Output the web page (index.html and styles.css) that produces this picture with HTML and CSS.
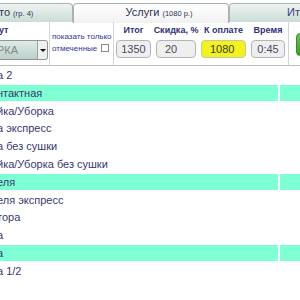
FILE: index.html
```html
<!DOCTYPE html>
<html lang="ru">
<head>
    <meta charset="UTF-8">
    <title>Услуги</title>
    <link rel="stylesheet" href="styles.css">
</head>
<body>
    <div class="app">
        <div class="tabs">
            <div class="tab tab-first">то <small>(гр. 4)</small></div>
            <div class="tab tab-active">Услуги <small>(1080 р.)</small></div>
            <div class="tab tab-last">Итог</div>
        </div>

        <div class="toolbar">
            <div class="cell cell-type">
                <div class="label label-type">ут</div>
                <div class="select">
                    <span class="select-text">РКА</span>
                    <span class="select-arrow"></span>
                </div>
            </div>
            <div class="cell cell-filter">
                показать только<br>отмеченные <span class="check"></span>
            </div>
            <div class="cell cell-sums">
                <div class="field field-total">
                    <div class="label">Итог</div>
                    <div class="box box-center">1350</div>
                </div>
                <div class="field field-discount">
                    <div class="label">Скидка, %</div>
                    <div class="box">20</div>
                </div>
                <div class="field field-pay">
                    <div class="label">К оплате</div>
                    <div class="box box-yellow">1080</div>
                </div>
                <div class="field field-time">
                    <div class="label">Время</div>
                    <div class="box box-center">0:45</div>
                </div>
            </div>
            <div class="cell cell-go">
                <div class="go-btn"></div>
            </div>
        </div>

        <div class="list">
            <div class="row"><div class="name">а 2</div><div class="extra"></div></div>
            <div class="row row-marked"><div class="name">нтактная</div><div class="extra"></div></div>
            <div class="row"><div class="name">йка/Уборка</div><div class="extra"></div></div>
            <div class="row"><div class="name">а экспресс</div><div class="extra"></div></div>
            <div class="row"><div class="name">а без сушки</div><div class="extra"></div></div>
            <div class="row"><div class="name">йка/Уборка без сушки</div><div class="extra"></div></div>
            <div class="row row-marked"><div class="name">еля</div><div class="extra"></div></div>
            <div class="row"><div class="name">еля экспресс</div><div class="extra"></div></div>
            <div class="row"><div class="name">тора</div><div class="extra"></div></div>
            <div class="row"><div class="name">а</div><div class="extra"></div></div>
            <div class="row row-marked"><div class="name">а</div><div class="extra"></div></div>
            <div class="row"><div class="name">а 1/2</div><div class="extra"></div></div>
        </div>
    </div>
</body>
</html>
```

FILE: styles.css
```css
:root {
    --navy: #2f2f7a;
    --row-text: #38386e;
    --line: #d4d4d4;
    --marked: #7fffd4;
}

* {
    margin: 0;
    padding: 0;
    box-sizing: border-box;
}

body {
    background: #ffffff;
    font-family: 'Liberation Sans', Arial, sans-serif;
    overflow: hidden;
}

.app {
    width: 300px;
    overflow: hidden;
}

/* вкладки */
.tabs {
    display: flex;
    height: 22px;
    padding-top: 3px;
    border-bottom: 1px solid #a9b4b2;
}

.tab {
    flex-shrink: 0;
    height: 19px;
    border: 1px solid #a9b4b2;
    border-bottom: none;
    border-radius: 4px 4px 0 0;
    background: linear-gradient(#eef4f2, #cbdcd8);
    color: #2c3250;
    font-size: 11px;
    line-height: 17px;
    white-space: nowrap;
}

.tab small {
    font-size: 7.5px;
}

.tab-first {
    width: 75px;
    margin-left: -2px;
    padding-left: 1px;
    border-left: none;
    border-radius: 0 4px 0 0;
}

.tab-active {
    width: 156px;
    height: 20px;
    margin-bottom: -1px;
    background: linear-gradient(#ffffff, #f1f1f1);
    text-align: center;
    padding-left: 16px;
}

.tab-last {
    width: 90px;
    padding-left: 57px;
    color: #3a3e78;
}

/* панель с итогами */
.toolbar {
    display: flex;
    height: 44px;
    border-bottom: 1px solid #bdbdbd;
}

.cell {
    flex-shrink: 0;
    border-right: 1px solid var(--line);
}

.label {
    color: var(--navy);
    font-size: 9px;
    font-weight: bold;
    line-height: 12px;
    height: 12px;
    white-space: nowrap;
}

.cell-type {
    width: 50px;
    padding-top: 2px;
}

.label-type {
    margin-left: -1px;
}

.select {
    display: flex;
    width: 48px;
    height: 20px;
    margin-top: 4px;
    border: 1px solid #8d9896;
    border-left: none;
    border-radius: 0 3px 3px 0;
    background: linear-gradient(#dfeae7, #bcd0cb);
}

.select-text {
    flex: 1;
    color: #808a88;
    font-size: 11px;
    line-height: 18px;
    margin-left: -3px;
}

.select-arrow {
    width: 10px;
    border-left: 1px solid #9aa4a2;
    background: #efefef;
    border-radius: 0 2px 2px 0;
    position: relative;
}

.select-arrow::after {
    content: "";
    position: absolute;
    left: 2px;
    top: 8px;
    border-left: 3px solid transparent;
    border-right: 3px solid transparent;
    border-top: 3px solid #111;
}

.cell-filter {
    width: 64px;
    padding: 9px 0 0 2px;
    color: #34349a;
    font-size: 8px;
    line-height: 12px;
    white-space: nowrap;
}

.check {
    display: inline-block;
    width: 8px;
    height: 8px;
    margin-left: 1px;
    border: 1px solid #8a8a8a;
    background: #ffffff;
    vertical-align: -1px;
}

.cell-sums {
    display: flex;
    gap: 5px;
    width: 175px;
    padding: 2px 0 0 2px;
}

.field {
    display: flex;
    flex-direction: column;
    align-items: center;
}

.field-total { width: 35px; }
.field-discount { width: 40px; }
.field-pay { width: 45px; }
.field-time { width: 34px; }

.box {
    width: 100%;
    height: 18px;
    margin-top: 4px;
    padding-left: 8px;
    border: 1px solid #b4b4b4;
    border-radius: 4px;
    background: #efefef;
    color: #4a4a60;
    font-size: 11px;
    line-height: 16px;
}

.box-center {
    padding-left: 0;
    text-align: center;
}

.box-yellow {
    background: #f2f21c;
    border-color: #c8c8a0;
    color: #3a3a30;
}

.cell-go {
    flex: 1;
    border-right: none;
    padding: 11px 0 0 7px;
}

.go-btn {
    width: 20px;
    height: 23px;
    border: 1px solid #3a8a2a;
    border-radius: 4px;
    background: linear-gradient(#66c45a, #3c9a2e);
}

/* список услуг */
.list {
    display: flex;
    flex-direction: column;
    gap: 1.8px;
    padding-top: 1px;
}

.row {
    display: flex;
    gap: 2px;
    height: 16px;
}

.name {
    flex-shrink: 0;
    width: 278px;
    text-indent: -3px;
    color: var(--row-text);
    font-size: 11px;
    line-height: 16px;
    white-space: nowrap;
    overflow: hidden;
}

.extra {
    flex: 1;
}

.row-marked .name,
.row-marked .extra {
    background: var(--marked);
}
```
